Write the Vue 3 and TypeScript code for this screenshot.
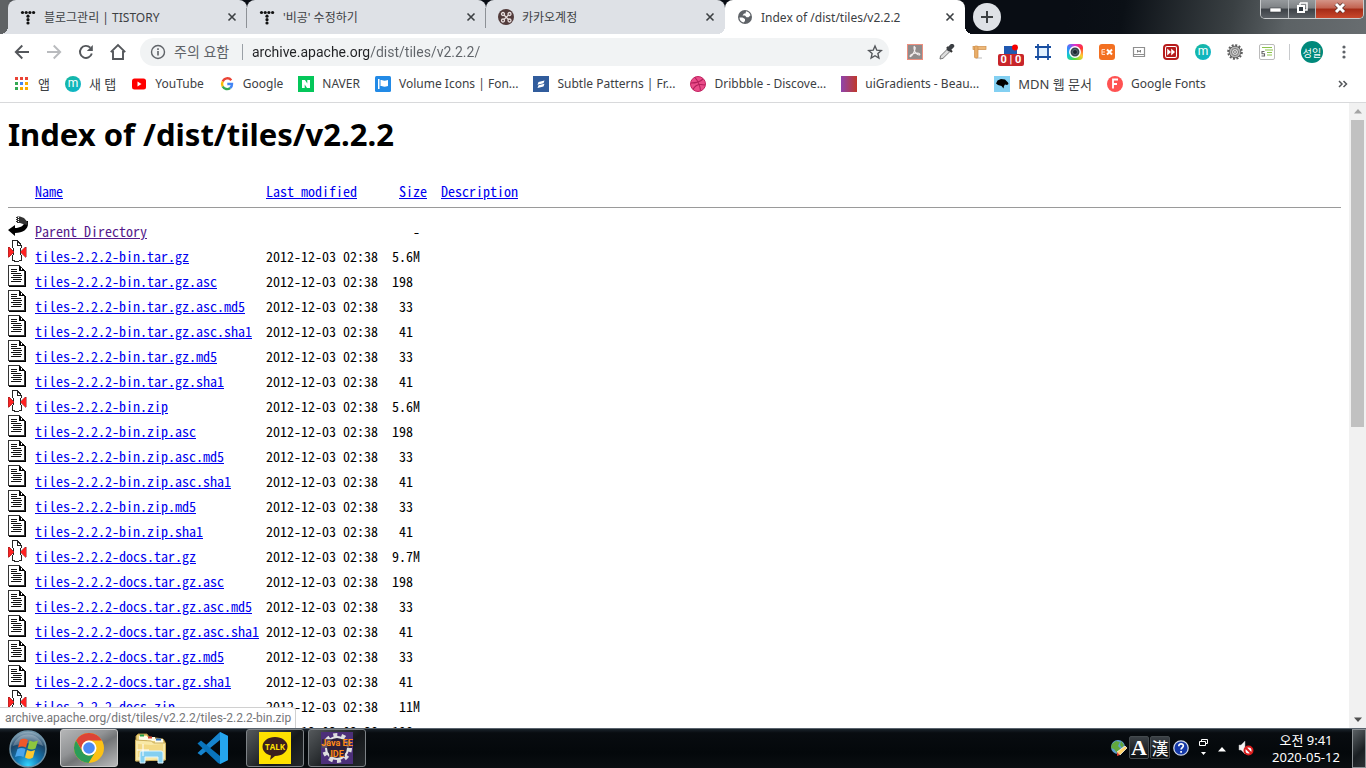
<script setup lang="ts">
import { ref } from 'vue'

interface Tab {
  title: string
  icon: 'tistory' | 'kakao' | 'globe'
  active?: boolean
}

interface Entry {
  name: string
  kind: 'back' | 'compressed' | 'text'
  modified: string
  size: string
}

const tabs: Tab[] = [
  { title: '블로그관리 | TISTORY', icon: 'tistory' },
  { title: "'비공' 수정하기", icon: 'tistory' },
  { title: '카카오계정', icon: 'kakao' },
  { title: 'Index of /dist/tiles/v2.2.2', icon: 'globe', active: true },
]

const bookmarks = [
  { id: 'apps', label: '앱', lang: 'ko' },
  { id: 'newtab', label: '새 탭', lang: 'ko' },
  { id: 'youtube', label: 'YouTube', lang: 'en' },
  { id: 'google', label: 'Google', lang: 'en' },
  { id: 'naver', label: 'NAVER', lang: 'en' },
  { id: 'flag', label: 'Volume Icons | Fon...', lang: 'en' },
  { id: 'subtle', label: 'Subtle Patterns | Fr...', lang: 'en' },
  { id: 'dribbble', label: 'Dribbble - Discove...', lang: 'en' },
  { id: 'gradient', label: 'uiGradients - Beau...', lang: 'en' },
  { id: 'mdn', label: 'MDN 웹 문서', lang: 'ko' },
  { id: 'fonts', label: 'Google Fonts', lang: 'en' },
]

const address = ref('archive.apache.org/dist/tiles/v2.2.2/')

const date = '2012-12-03 02:38'
const file = (suffix: string, size: string): Entry => ({
  name: `tiles-2.2.2-${suffix}`,
  kind: size.endsWith('M') ? 'compressed' : 'text',
  modified: date,
  size: size.endsWith('M') ? size : `${size} `,
})
const group = (base: string, size: string): Entry[] => [
  file(base, size),
  file(`${base}.asc`, '198'),
  file(`${base}.asc.md5`, '33'),
  file(`${base}.asc.sha1`, '41'),
  file(`${base}.md5`, '33'),
  file(`${base}.sha1`, '41'),
]
const entries: Entry[] = [
  { name: 'Parent Directory', kind: 'back', modified: '', size: '-' },
  ...group('bin.tar.gz', '5.6M'),
  ...group('bin.zip', '5.6M'),
  ...group('docs.tar.gz', '9.7M'),
  file('docs.zip', '11M'),
  file('docs.zip.asc', '198'),
]
</script>

<template>
  <div class="screen">
    <header class="tabstrip">
      <div v-for="(tab, i) in tabs" :key="i" class="tab" :class="{ active: tab.active, divided: i < 2, first: i === 0 }">
        <svg v-if="tab.icon === 'tistory'" width="16" height="16" viewBox="0 0 16 16" fill="#111">
          <circle cx="2.500" cy="3.500" r="1.600" /><circle cx="6.200" cy="3.500" r="1.600" /><circle cx="9.900" cy="3.500" r="1.600" /><circle cx="13.600" cy="3.500" r="1.600" />
          <circle cx="8" cy="7.200" r="1.600" /><circle cx="8" cy="10.700" r="1.600" /><circle cx="8" cy="14" r="1.600" />
        </svg>
        <svg v-else-if="tab.icon === 'kakao'" width="16" height="16" viewBox="0 0 16 16">
          <circle cx="8" cy="8" r="8" fill="#523b3b" />
          <g fill="none" stroke="#e8dede" stroke-width="1.300"><path d="M6 6l4.500 4.500M6 10.500L10.500 6" /><circle cx="5" cy="5" r="1.500" /><circle cx="11.500" cy="5" r="1.500" /><circle cx="5" cy="11.500" r="1.500" /><circle cx="11.500" cy="11.500" r="1.500" /></g>
        </svg>
        <svg v-else width="16" height="16" viewBox="0 0 16 16">
          <circle cx="8" cy="8" r="7" fill="#5f6368" />
          <path d="M2.500 8.500h3l2.500 1.500v2l-1.500 1.500C4 13 2.500 11 2.500 8.500zM9 2.300c2 .3 4 2 4.500 4l-2 2H9.500L8 6.500H5.500L7 4.500h1.500z" fill="#fff" />
        </svg>
        <span class="tab-title">{{ tab.title }}</span>
        <button class="tab-close" :aria-label="`Close ${tab.title}`">
          <svg width="16" height="16" viewBox="0 0 16 16"><path d="M4.500 4.500l7 7M11.500 4.500l-7 7" stroke="#3c4043" stroke-width="1.600" /></svg>
        </button>
      </div>
      <button class="new-tab" aria-label="New tab">
        <svg width="14" height="14" viewBox="0 0 14 14"><path d="M7 1v12M1 7h12" stroke="#3c4043" stroke-width="2" /></svg>
      </button>
      <div class="window-controls">
        <button class="wc" aria-label="Minimize"><svg width="14" height="14" viewBox="0 0 14 14"><rect x="2" y="7" width="11" height="4" fill="#fff" stroke="#3a3e42" stroke-width=".6" /></svg></button>
        <button class="wc" aria-label="Restore"><svg width="14" height="14" viewBox="0 0 14 14"><path d="M5 2h7v7h-2M5 2v2" fill="none" stroke="#fff" stroke-width="1.500" /><rect x="3" y="5" width="6" height="6" fill="#333b42" stroke="#fff" stroke-width="2" /></svg></button>
        <button class="wc wc-close" aria-label="Close"><svg width="16" height="14" viewBox="0 0 16 14"><path d="M4 3l8 8M12 3l-8 8" stroke="#57302b" stroke-width="4.500" /><path d="M4 3l8 8M12 3l-8 8" stroke="#fff" stroke-width="3" /></svg></button>
      </div>
    </header>

    <nav class="toolbar" aria-label="Browser toolbar">
      <button class="tool" aria-label="Back"><svg width="16" height="16" viewBox="0 0 16 16"><path d="M15 8H2M8.300 1.500L1.800 8l6.500 6.500" fill="none" stroke="#54575b" stroke-width="1.900" /></svg></button>
      <button class="tool" aria-label="Forward"><svg width="16" height="16" viewBox="0 0 16 16"><path d="M1 8h13M7.700 1.500L14.200 8l-6.500 6.500" fill="none" stroke="#b9bbbe" stroke-width="1.900" /></svg></button>
      <button class="tool" aria-label="Reload"><svg width="16" height="16" viewBox="0 0 16 16"><path d="M13.800 9.500a6 6 0 1 1-1.500-5.800" fill="none" stroke="#54575b" stroke-width="1.900" /><path d="M14.800 1v6H8.800z" fill="#54575b" /></svg></button>
      <button class="tool" aria-label="Home"><svg width="18" height="18" viewBox="0 0 18 18"><path d="M1.800 9.200L9 2l7.200 7.200M4 8v8h10V8" fill="none" stroke="#54575b" stroke-width="1.900" /></svg></button>
      <div class="omnibox">
        <svg width="16" height="16" viewBox="0 0 16 16"><circle cx="8" cy="8" r="6.500" fill="none" stroke="#5f6368" stroke-width="1.400" /><path d="M8 7v4.500M8 4.300v1.600" stroke="#5f6368" stroke-width="1.600" /></svg>
        <label class="warning" for="address">주의 요함</label>
        <input id="address" v-model="address" class="address" type="text" spellcheck="false" />
        <button class="star" aria-label="Bookmark this page"><svg width="16" height="16" viewBox="0 0 16 16"><path d="M8 2l1.800 4.200 4.500.4-3.400 3 1 4.400L8 11.700 4.100 14l1-4.400-3.400-3 4.500-.4z" fill="none" stroke="#54575b" stroke-width="1.400" /></svg></button>
      </div>
      <div class="extensions">
        <button class="ext" aria-label="Acrobat"><svg width="16" height="16" viewBox="0 0 16 16"><rect x=".5" y=".5" width="15" height="15" fill="#918b8b" stroke="#ee8f7f" /><path d="M7.500 3c1.500 0 .5 3-1 6S3 13.500 3 12s4-3 7-3 3.500 2 2 2-5-3-5-6.500.5-1.500.5-1.500z" fill="none" stroke="#f4eeee" stroke-width="1.100" /></svg></button>
        <button class="ext" aria-label="Eyedropper"><svg width="16" height="16" viewBox="0 0 16 16"><path d="M9 4.500L1.500 12 1 15l3-.7L11.500 7z" fill="#ddd" stroke="#777" /><path d="M8 3l5 5" stroke="#333" stroke-width="2.200" /><path d="M10 5l3-3" stroke="#3b3f44" stroke-width="4.500" stroke-linecap="round" /></svg></button>
        <button class="ext" aria-label="Ruler"><svg width="16" height="16" viewBox="0 0 16 16"><path d="M5 13h6v2H5z" fill="#ddd" /><rect x="2" y="2.500" width="13" height="3" fill="#edb878" stroke="#cf8e48" stroke-width=".7" /><rect x="3.500" y="2" width="3.500" height="12" rx="1" fill="#e9ad68" stroke="#cf8e48" stroke-width=".7" /></svg></button>
        <button class="ext counter" aria-label="Counter"><svg width="16" height="16" viewBox="0 0 16 16"><rect x="1" y="2" width="13" height="8" fill="#2058b0" /><circle cx="12" cy="3.500" r="3" fill="#f50000" /></svg><span class="badge">0 | 0</span></button>
        <button class="ext" aria-label="Page ruler"><svg width="16" height="16" viewBox="0 0 16 16"><rect x="3" y="3" width="10" height="10" fill="#e2f1ff" /><path d="M3 0v16M13 0v16M0 3h16M0 13h16" stroke="#174da0" stroke-width="1.800" /></svg></button>
        <button class="ext" aria-label="Color camera"><span class="rainbow"><svg width="12" height="12" viewBox="0 0 12 12"><circle cx="6" cy="6" r="5.200" fill="#35454e" stroke="#fff" stroke-width="1.500" /><circle cx="6" cy="6" r="2.500" fill="#19262e" stroke="#71818a" stroke-width=".7" /></svg></span></button>
        <button class="ext" aria-label="EX"><svg width="16" height="16" viewBox="0 0 16 16"><rect width="16" height="16" rx="3" fill="#f37021" /><path d="M3 5.500v5M3 5.500h3M3 8h3M3 10.500h3" stroke="#ffd7bf" stroke-width="1.200" /><path d="M8 5.500l5 5M13 5.500l-5 5" stroke="#fff" stroke-width="2" /></svg></button>
        <button class="ext" aria-label="Display"><svg width="16" height="16" viewBox="0 0 16 16"><path d="M2.500 3.500h11v7h-11zM2.500 10.500v2h11v-2" fill="#fff" stroke="#8f8f8f" stroke-width="1.200" /><path d="M6.500 8.500v-2.500l1.500 2 1.500-2v2.500" fill="none" stroke="#777" stroke-width=".9" /></svg></button>
        <button class="ext" aria-label="Fast forward"><svg width="16" height="16" viewBox="0 0 16 16"><rect x="1" y="1" width="14" height="14" rx="3" fill="#fff" stroke="#b71c1c" stroke-width="2" /><rect x="3" y="3" width="10" height="10" rx="1" fill="#b71c1c" /><path d="M4.200 4.500L8 8l-3.800 3.500zM8.200 4.500L12 8l-3.800 3.500z" fill="#fff" /></svg></button>
        <button class="ext" aria-label="Momentum"><span class="momentum">m</span></button>
        <button class="ext" aria-label="Settings gear"><svg width="16" height="16" viewBox="0 0 16 16"><circle cx="8" cy="8" r="6.800" fill="none" stroke="#5c5c5c" stroke-width="2" stroke-dasharray="2 1.560" /><circle cx="8" cy="8" r="5.800" fill="#b5b5b5" stroke="#666" /><circle cx="8" cy="8" r="3.500" fill="#ddd" stroke="#777" /><circle cx="8" cy="8" r="1.400" fill="#fff" stroke="#777" /></svg></button>
        <button class="ext" aria-label="Text lines"><svg width="16" height="16" viewBox="0 0 16 16"><rect x=".5" y=".5" width="15" height="15" rx="1.500" fill="#fff" stroke="#bbb" /><path d="M3 3.500h10M6 6h8M8 8.500h5M8 11h5" stroke="#8bc34a" stroke-width="1.200" /><path d="M5.500 7.500H3v2.200h2.500V12H2.500" fill="none" stroke="#666" stroke-width="1.100" /></svg></button>
      </div>
      <span class="rule"></span>
      <button class="avatar" aria-label="Profile">성일</button>
      <button class="tool menu" aria-label="Menu"><svg width="4" height="16" viewBox="0 0 4 16" fill="#5f6368"><circle cx="2" cy="3" r="1.600" /><circle cx="2" cy="8" r="1.600" /><circle cx="2" cy="13" r="1.600" /></svg></button>
    </nav>

    <nav class="bookmarks" aria-label="Bookmarks">
      <a v-for="b in bookmarks" :key="b.id" class="bookmark" href="#">
        <svg v-if="b.id === 'apps'" width="16" height="16" viewBox="0 0 16 16"><path d="M1 1h3v3H1zM6 1h3v3H6zM11 1h3v3h-3z" fill="#ea4335" /><path d="M1 6h3v3H1zM1 11h3v3H1z" fill="#34a853" /><path d="M6 6h3v3H6z" fill="#4285f4" /><path d="M11 6h3v3h-3zM6 11h3v3H6zM11 11h3v3h-3z" fill="#f9ab00" /></svg>
        <span v-else-if="b.id === 'newtab'" class="momentum">m</span>
        <svg v-else-if="b.id === 'youtube'" width="16" height="16" viewBox="0 0 16 16"><rect x="1" y="2.500" width="14" height="11" rx="2.500" fill="#f00" /><path d="M6.500 5.500L10.500 8l-4 2.500z" fill="#fff" /></svg>
        <svg v-else-if="b.id === 'google'" width="16" height="16" viewBox="0 0 16 16" fill="none" stroke-width="2.400"><path d="M12.300 4.200A5 5 0 0 0 3.700 5.500" stroke="#ea4335" /><path d="M3.700 5.500a5 5 0 0 0 0 5" stroke="#fbbc05" /><path d="M3.700 10.500a5 5 0 0 0 7.500 1.500" stroke="#34a853" /><path d="M11.200 12A5 5 0 0 0 13 8H8.300" stroke="#4285f4" /></svg>
        <svg v-else-if="b.id === 'naver'" width="16" height="16" viewBox="0 0 16 16"><rect width="16" height="16" fill="#04c75a" /><path d="M4 4h3l2.300 3.500V4H12v8H9L6.700 8.500V12H4z" fill="#fff" /></svg>
        <svg v-else-if="b.id === 'flag'" width="16" height="16" viewBox="0 0 16 16"><rect width="16" height="16" rx="1.500" fill="#228ae6" /><path d="M3 3h1.500v10H3zM5.500 4c2 0 3 1.500 7.500 0v6c-4.500 1.500-5.500 0-7.500 0z" fill="#fff" /></svg>
        <svg v-else-if="b.id === 'subtle'" width="16" height="16" viewBox="0 0 16 16"><rect width="16" height="16" fill="#315c9c" /><path d="M5.500 6l6-1.500-1 2.800-6 1.500zM5.500 9.200l6-1.500-1 2.800-6 1.500z" fill="#fff" /></svg>
        <svg v-else-if="b.id === 'dribbble'" width="16" height="16" viewBox="0 0 16 16"><circle cx="8" cy="8" r="7.500" fill="#ea4c89" stroke="#c32361" /><path d="M5 1.500c3 3.500 5 8 5.500 13M1 7c5 0 9-1 12-4M3 13.500C5 9 9 7.500 15 9" fill="none" stroke="#b21f5a" stroke-width="1.100" /></svg>
        <span v-else-if="b.id === 'gradient'" class="swatch"></span>
        <svg v-else-if="b.id === 'mdn'" width="16" height="16" viewBox="0 0 16 16"><rect width="16" height="16" fill="#83d0f2" /><path d="M2 7.500l1.500-3L7 3l4 .5 3 3 .5 1.500-1.500 1-2-.5L10 10l-.5 2.500L7.500 10 4 9z" fill="#000" /></svg>
        <svg v-else width="16" height="16" viewBox="0 0 16 16"><circle cx="8" cy="8" r="8" fill="#ff5252" /><path d="M6 12.500v-9h5M6 8h4" fill="none" stroke="#fff" stroke-width="1.800" /></svg>
        <span class="bookmark-label" :lang="b.lang">{{ b.label }}</span>
      </a>
      <button class="more" aria-label="More bookmarks"><svg width="10" height="8" viewBox="0 0 10 8"><path d="M1 1l3 3-3 3M5.500 1l3 3-3 3" fill="none" stroke="#54575b" stroke-width="1.500" /></svg></button>
    </nav>

    <div class="viewport">
      <main class="page">
        <h1>Index of /dist/tiles/v2.2.2</h1>
        <table class="listing">
          <thead>
            <tr>
              <th class="c-icon"></th>
              <th class="c-name"><a href="#">Name</a></th>
              <th class="c-date"><a href="#">Last modified</a></th>
              <th class="c-size"><a href="#">Size</a></th>
              <th class="c-desc"><a href="#">Description</a></th>
            </tr>
          </thead>
          <tbody>
            <tr v-for="e in entries" :key="e.name">
              <td class="c-icon">
                <svg v-if="e.kind === 'back'" width="20" height="22" viewBox="0 0 20 22"><path d="M0 15l7-5v3c5 0 9-2 10-7h3v3c0 5-5 9-13 9v3z" fill="#000" /><path d="M8 1.500h4l4 1.500 3.500 4v3L15 9l-3-1H8z" fill="#333" /><path d="M8.500 1v8M10.500 2v6" stroke="#fff" stroke-width="1" stroke-dasharray="1 1" /></svg>
                <svg v-else-if="e.kind === 'compressed'" width="20" height="22" viewBox="0 0 20 22" shape-rendering="crispEdges"><path d="M4 .5h6l4 5V21H4z" fill="#fff" /><path d="M4.500 8V.5h5l4 5V8M9.500.5v5h4M5.500 8v7M12.500 8v7M4.500 15v5.500h2M13.500 15v5.500h-3M6 21.500h5" fill="none" stroke="#222" /><path d="M0 7h1l5 5-5 5H0zM18 7h-1l-5 5 5 5h1z" fill="#f22" stroke="#822" stroke-width=".5" /></svg>
                <svg v-else width="20" height="22" viewBox="0 0 20 22" shape-rendering="crispEdges"><path d="M.5.5h11l5 5v15H.5z" fill="#fff" stroke="#333" /><path d="M11.500.5v5h5M12.500 2v3M14 4.500h2M17.500 6v15.500H1" fill="none" stroke="#000" /><path d="M3 4.500h6M3 6.500h6M3 8.500h10M5 10.500h9M3 12.500h10M5 14.500h9M3 16.500h10" stroke="#111" /></svg>
              </td>
              <td class="c-name"><a href="#" :class="{ visited: e.kind === 'back' }">{{ e.name }}</a></td>
              <td class="c-date">{{ e.modified }}</td>
              <td class="c-size">{{ e.size }}</td>
              <td class="c-desc"></td>
            </tr>
          </tbody>
        </table>
      </main>
      <div class="scrollbar">
        <button aria-label="Scroll up"><svg width="8" height="5" viewBox="0 0 8 5"><path d="M4 0l4 4.500H0z" fill="#a3a3a3" /></svg></button>
        <div class="track"><div class="thumb"></div></div>
        <button aria-label="Scroll down"><svg width="8" height="5" viewBox="0 0 8 5"><path d="M4 5l4-4.500H0z" fill="#505050" /></svg></button>
      </div>
      <div class="status">archive.apache.org/dist/tiles/v2.2.2/tiles-2.2.2-bin.zip</div>
    </div>

    <footer class="taskbar">
      <button class="start" aria-label="Start">
        <svg width="38" height="38" viewBox="0 0 38 38">
          <defs>
            <radialGradient id="orb" cx=".5" cy=".95" r=".95"><stop offset="0" stop-color="#33d5ff" /><stop offset=".35" stop-color="#1478b4" /><stop offset=".7" stop-color="#1b4568" /><stop offset="1" stop-color="#9db6c6" /></radialGradient>
          </defs>
          <circle cx="19" cy="19" r="18" fill="url(#orb)" stroke="#6f93a8" stroke-width="1.500" />
          <path d="M4 16a15.500 15.500 0 0 1 30 0c-8-4-20-3-30 0z" fill="#fff" opacity=".25" />
          <path d="M11 10c3-2 5-1.500 8 0l-2 7.500c-3-1.500-5-1.500-8 0z" fill="#f0582a" />
          <path d="M20.500 10.500c3 1.500 5 1.500 8.500 0l-2.500 8c-3 1.500-5 1-8 0z" fill="#8cc63f" />
          <path d="M8.500 19c3-1.500 5-1.500 8 0l-2 8c-3-1.500-5-1.500-8.500 0z" fill="#4aa5ec" />
          <path d="M18 20c3 1.500 5 1.500 8 0l-2 7.500c-3 2-5 1.500-8 0z" fill="#fdc82f" />
        </svg>
      </button>
      <button class="task lit" aria-label="Chrome">
        <svg width="32" height="32" viewBox="0 0 32 32"><circle cx="16" cy="16" r="15" fill="#fbc116" /><path d="M3 8.500A15 15 0 0 1 29 8.500H16a7.500 7.500 0 0 0-6.500 11z" fill="#dc4437" /><path d="M3 8.500a15 15 0 0 0 12.500 22.500L22.500 19.700a7.500 7.500 0 0 1-13 0z" fill="#2b9c58" /><circle cx="16" cy="16" r="7.500" fill="#fff" /><circle cx="16" cy="16" r="5.800" fill="#4b8bf5" /></svg>
      </button>
      <button class="task" aria-label="File Explorer">
        <svg width="34" height="32" viewBox="0 0 34 32"><path d="M2 4l2-2h9l2 3 14 2 2 3v18l-29 1z" fill="#e9cf78" stroke="#a98b3e" /><path d="M5 4h8v4H5zM13 5h8v4h-8zM21 7h8v4h-8z" fill="#fffbe8" /><rect x="6" y="2.500" width="4" height="2" fill="#24a148" /><rect x="14" y="4.500" width="4" height="2" fill="#d34335" /><rect x="22" y="6.500" width="5" height="2" fill="#3575c5" /><path d="M1.500 8l16 1 2 2h12v17l-30 1z" fill="#f9e9a7" stroke="#c9ad5c" /><path d="M4 12l13 1 12-1v13H4z" fill="#f3d985" /><path d="M6 31V21q0-2 2-2h19q2 0 2 2v10h-5v-6H11v6z" fill="#84cff0" stroke="#dff6ff" /><path d="M9 12v12M3 18h12" stroke="#fff" stroke-width="1" /></svg>
      </button>
      <button class="task" aria-label="Visual Studio Code">
        <svg width="34" height="34" viewBox="0 0 34 34"><path d="M24 1l8 4v24l-8 4V9L5 24.500 1.500 22z" fill="#1684ce" /><path d="M24 33V25L5 9.500 1.500 12.500 22 32z" fill="#0974bc" /><path d="M24 1l8 4v24l-8 4z" fill="#25a5ed" /></svg>
      </button>
      <button class="task open" aria-label="KakaoTalk">
        <svg width="32" height="32" viewBox="0 0 32 32"><rect width="32" height="32" fill="#ffe100" /><path d="M16 5c7 0 12.500 4.200 12.500 9.500S23 24 16 24l-5 4 1-4.500c-5-1-8.500-4.500-8.500-9C3.500 9.200 9 5 16 5z" fill="#3b1e1e" /><text x="16" y="18" text-anchor="middle" class="talk">TALK</text></svg>
      </button>
      <button class="task open" aria-label="Java EE IDE">
        <svg width="36" height="32" viewBox="0 0 36 32"><rect x="2" width="32" height="32" fill="#4c2f79" /><circle cx="18" cy="16" r="13" fill="none" stroke="#ddd" stroke-width="4" stroke-dasharray="4 4.170" /><circle cx="18" cy="16" r="11" fill="#2c2442" stroke="#e2e2e2" stroke-width="2" /><path d="M3 7h30v9H3zM10 16h16v9H10z" fill="#2c2038" opacity=".7" /><text x="18" y="14" text-anchor="middle" class="ide">Java EE</text><text x="18" y="25" text-anchor="middle" class="ide">IDE</text></svg>
      </button>
      <div class="tray">
        <svg class="globe" width="18" height="18" viewBox="0 0 18 18"><circle cx="8" cy="8" r="7" fill="#5c9fd0" /><path d="M2 5l4-3 4 1-2 4 3 3-4 4-3-4-3-1zM11 2l3 4-2 3-2-3z" fill="#62a83d" /><path d="M7 13l8-6 2 2-7 7z" fill="#ffd36a" stroke="#fff" stroke-width=".7" /><path d="M7 13l3 3-3 1z" fill="#e04030" /></svg>
        <button class="ime latin">A</button>
        <button class="ime">漢</button>
        <svg class="help" width="16" height="16" viewBox="0 0 16 16"><circle cx="8" cy="8" r="7.200" fill="#1438a8" stroke="#cdd5e8" stroke-width="1.300" /><path d="M5.800 6.200C5.800 3 10.500 3.300 10.300 6c-.1 1.500-2.200 1.700-2.200 3.600M8.100 11v1.700" fill="none" stroke="#fff" stroke-width="1.700" /></svg>
        <svg class="restore" width="9" height="20" viewBox="0 0 9 20"><path d="M2.500 3.500v-2h6v4h-2M.5 3.500h6v4h-6z" fill="none" stroke="#fff" /><path d="M2 14h5l-2.500 3z" fill="#fff" /></svg>
        <svg class="caret" width="8" height="5" viewBox="0 0 8 5"><path d="M4 0l4 4.500H0z" fill="#fff" /></svg>
        <svg width="16" height="16" viewBox="0 0 16 16"><path d="M1 5h2l4-4v13l-4-4H1z" fill="#f4f4f4" stroke="#aaa" stroke-width=".5" /><circle cx="10.500" cy="10.500" r="4" fill="#fff" stroke="#dc1c1c" stroke-width="2" /><path d="M8 8l5 5" stroke="#dc1c1c" stroke-width="2" /></svg>
        <div class="clock"><span>오전 9:41</span><span>2020-05-12</span></div>
        <button class="desktop" aria-label="Show desktop"></button>
      </div>
    </footer>
  </div>
</template>

<style>
body {
  margin: 0;
}
</style>

<style scoped>
.screen {
  display: flex;
  flex-direction: column;
  height: 100vh;
  overflow: hidden;
  background: #fff;
  font-family: "Noto Sans", "Noto Sans CJK KR", sans-serif;
  font-size: 12px;
  color: #3c4043;
}
.screen * {
  box-sizing: border-box;
}
svg {
  display: block;
  flex: none;
}
button {
  display: flex;
  align-items: center;
  justify-content: center;
  padding: 0;
  border: 0;
  background: none;
  font: inherit;
  color: inherit;
  flex: none;
}
.tabstrip {
  display: flex;
  align-items: flex-start;
  height: 34px;
  flex: none;
  padding-left: 8px;
  background: linear-gradient(90deg, #5f6264 0, #5f6264 8px, transparent 24px), linear-gradient(100deg, #090d14 78%, #0b1016 82%, #3a4043 90%, #5c6265 94%, #686d70 100%);
}
.tab {
  position: relative;
  display: flex;
  align-items: center;
  gap: 8px;
  flex: 0 1 239px;
  height: 34px;
  padding: 0 7px 0 12px;
  border-radius: 8px 8px 0 0;
  background: #dee1e6;
}
.tab.active {
  background: #fff;
  flex-basis: 240px;
}
.tab.first::before,
.tab.active::before,
.tab.active::after {
  content: "";
  position: absolute;
  bottom: 0;
  left: -8px;
  width: 8px;
  height: 8px;
  background: radial-gradient(circle at 0 0, transparent 8px, #fff 8px);
}
.tab.first::before {
  background: radial-gradient(circle at 0 0, transparent 8px, #dee1e6 8px);
}
.tab.active::after {
  left: auto;
  right: -8px;
  background: radial-gradient(circle at 100% 0, transparent 8px, #fff 8px);
}
.tab.divided::after {
  content: "";
  position: absolute;
  right: 0;
  top: 8px;
  width: 1px;
  height: 20px;
  background: #8d9196;
}
.tab-title {
  flex: 1;
  white-space: nowrap;
  overflow: hidden;
}
.new-tab {
  width: 28px;
  height: 28px;
  margin: 3px 0 0 8px;
  border-radius: 50%;
  background: #dee1e6;
}
.window-controls {
  display: flex;
  height: 19px;
  margin-left: auto;
  margin-right: 2px;
  border: 1px solid #c9cccd;
  border-top: 0;
  border-radius: 0 0 5px 5px;
  overflow: hidden;
}
.wc {
  width: 28px;
  padding-bottom: 2px;
  border-right: 1px solid #b6babd;
  background: linear-gradient(#969a9d 0, #7d8184 45%, #3c4146 50%, #5c6166 100%);
}
.wc:nth-child(2) {
  width: 27px;
}
.wc-close {
  width: 47px;
  border-right: 0;
  background: linear-gradient(#d49487 0, #c26250 45%, #a42b17 50%, #c9482c 100%);
}
.toolbar {
  display: flex;
  align-items: center;
  gap: 4px;
  height: 36px;
  flex: none;
  padding: 0 8px;
}
.tool {
  width: 28px;
  height: 28px;
}
.omnibox {
  display: flex;
  align-items: center;
  flex: 1;
  height: 28px;
  margin-left: 4px;
  padding: 0 6px 0 10px;
  border-radius: 14px;
  background: #f1f3f4;
}
.warning {
  width: 69px;
  margin-left: 8px;
  border-right: 1px solid #9aa0a6;
  font-size: 14px;
  line-height: 16px;
  color: #5f6368;
  white-space: nowrap;
}
.address {
  flex: 1;
  min-width: 0;
  height: 24px;
  margin-left: 9px;
  padding: 0;
  border: 0;
  outline: 0;
  font: 14px Roboto, sans-serif;
  color: transparent;
  background: linear-gradient(90deg, #202124 117px, #5f6368 117px);
  background-clip: text;
}
.star {
  width: 16px;
}
.extensions {
  display: flex;
  margin-left: 6px;
}
.ext {
  position: relative;
  width: 32px;
  height: 28px;
}
.badge {
  position: absolute;
  left: 3px;
  top: 16px;
  width: 26px;
  height: 12px;
  border-radius: 2px;
  background: #c8252a;
  color: #fff;
  font-family: Roboto, sans-serif;
  font-size: 11px;
  font-weight: 700;
  line-height: 12px;
  text-align: center;
  white-space: nowrap;
}
.momentum {
  width: 16px;
  height: 16px;
  border-radius: 50%;
  background: linear-gradient(135deg, #19b79b, #0bb5d0);
  color: #fff;
  font-family: Roboto, sans-serif;
  font-size: 12px;
  line-height: 15px;
  text-align: center;
}
.rainbow {
  display: flex;
  align-items: center;
  justify-content: center;
  width: 16px;
  height: 16px;
  border-radius: 4px;
  background: conic-gradient(#e12bd0, #f33, #fc3, #5d3, #1cc, #38f, #e12bd0);
}
.rule {
  width: 1px;
  height: 16px;
  margin-left: 2px;
  background: #c8cacd;
}
.avatar {
  width: 22px;
  height: 22px;
  margin: 0 3px 0 7px;
  border-radius: 50%;
  background: #00897b;
  color: #fff;
  font-size: 10px;
}
.bookmarks {
  display: flex;
  align-items: center;
  gap: 15px;
  height: 33px;
  flex: none;
  padding: 0 18px 4px 14px;
  border-bottom: 1px solid #d8d9db;
}
.bookmark {
  display: flex;
  align-items: center;
  gap: 8px;
  flex: none;
  color: inherit;
  text-decoration: none;
  white-space: nowrap;
}
.bookmark-label {
  line-height: 16px;
}
.bookmark-label:lang(ko) {
  font-size: 13px;
}
.swatch {
  width: 16px;
  height: 16px;
  background: linear-gradient(90deg, #8e44ad, #c0392b);
}
.more {
  margin-left: auto;
}
.viewport {
  position: relative;
  display: flex;
  flex: 1;
  min-height: 0;
}
.page {
  flex: 1;
  min-width: 0;
  padding: 9px 8px 0;
  overflow: hidden;
  color: #000;
}
h1 {
  margin: 0 0 27px;
  font-size: 31px;
  line-height: 44px;
  font-weight: 700;
  white-space: nowrap;
}
.listing {
  width: 100%;
  table-layout: fixed;
  border-collapse: collapse;
  font-family: "Noto Sans Mono CJK KR", "Liberation Mono", monospace;
  font-size: 14px;
  line-height: 16px;
}
.listing th,
.listing td {
  padding: 0;
  font-weight: 400;
  text-align: left;
  white-space: pre;
}
.listing th {
  height: 20px;
  padding-bottom: 8px;
  border-bottom: 1px solid #9a9a9a;
}
.listing tbody::before {
  content: "";
  display: block;
  height: 7px;
}
.listing td {
  height: 25px;
  padding-top: 7px;
}
.listing .c-icon {
  width: 27px;
  padding-top: 0;
  vertical-align: top;
}
.listing .c-name {
  width: 231px;
}
.listing .c-date {
  width: 119px;
}
.listing .c-size {
  width: 42px;
  text-align: right;
}
.listing td.c-size {
  padding-right: 7px;
}
.listing .c-desc {
  padding-left: 14px;
}
.listing a {
  color: #0000ee;
}
.listing a.visited {
  color: #551a8b;
}
.scrollbar {
  display: flex;
  flex-direction: column;
  width: 17px;
  flex: none;
  background: #f1f1f1;
}
.scrollbar button {
  height: 17px;
}
.track {
  flex: 1;
  padding: 0 2px;
}
.thumb {
  height: 52%;
  background: #c1c1c1;
}
.status {
  position: absolute;
  left: 0;
  bottom: 0;
  height: 21px;
  padding: 0 4px 0 5px;
  border: 1px solid #d0d0d0;
  border-width: 1px 1px 0 0;
  border-radius: 0 4px 0 0;
  background: #fff;
  color: #757679;
  font-family: Roboto, sans-serif;
  line-height: 20px;
  white-space: nowrap;
}
.taskbar {
  display: flex;
  height: 40px;
  flex: none;
  gap: 4px;
  border-top: 1px solid #59636d;
  background: linear-gradient(#1a232b 0, #080c10 10%, #04080b 60%, #0a0e11 100%);
}
.start {
  width: 56px;
}
.task {
  width: 58px;
  height: 38px;
  border-radius: 3px;
}
.task.open {
  border: 1px solid #7d8286;
  background: linear-gradient(135deg, #55595c 0, #2b2f32 40%, #15181b 60%, #25292c 100%);
}
.task.lit {
  border: 1px solid #c9c9c9;
  background: linear-gradient(150deg, #b5b6b7 0, #919395 40%, #727476 55%, #b9babb 100%);
}
.talk {
  font: 700 8px "Open Sans", sans-serif;
  fill: #ffe100;
}
.ide {
  font: 700 9px Roboto, sans-serif;
  fill: #ff8b17;
}
.tray {
  display: flex;
  align-items: center;
  margin-left: auto;
  color: #fff;
}
.tray > svg {
  margin-bottom: 2px;
}
.ime {
  width: 20px;
  height: 23px;
  margin: 0 0 2px 1px;
  border: 1px solid #444a4e;
  border-radius: 2px;
  background: linear-gradient(#3a4045, #0c1013);
  font: 17px "Noto Sans CJK KR", sans-serif;
  line-height: 20px;
}
.ime.latin {
  font-family: "Liberation Serif", serif;
  font-size: 22px;
  font-weight: 700;
}
.tray .help {
  margin-left: 3px;
}
.tray .restore {
  margin-left: 10px;
}
.tray .caret {
  margin: 2px 12px 0 10px;
}
.clock {
  display: flex;
  flex-direction: column;
  align-items: center;
  width: 92px;
  margin-left: 6px;
  font-size: 13px;
  line-height: 17px;
  white-space: nowrap;
}
.desktop {
  width: 14px;
  height: 39px;
  border: 1px solid #8b9094;
  background: linear-gradient(135deg, #5a6064, #1a1f23 60%, #2c3135);
}
</style>
